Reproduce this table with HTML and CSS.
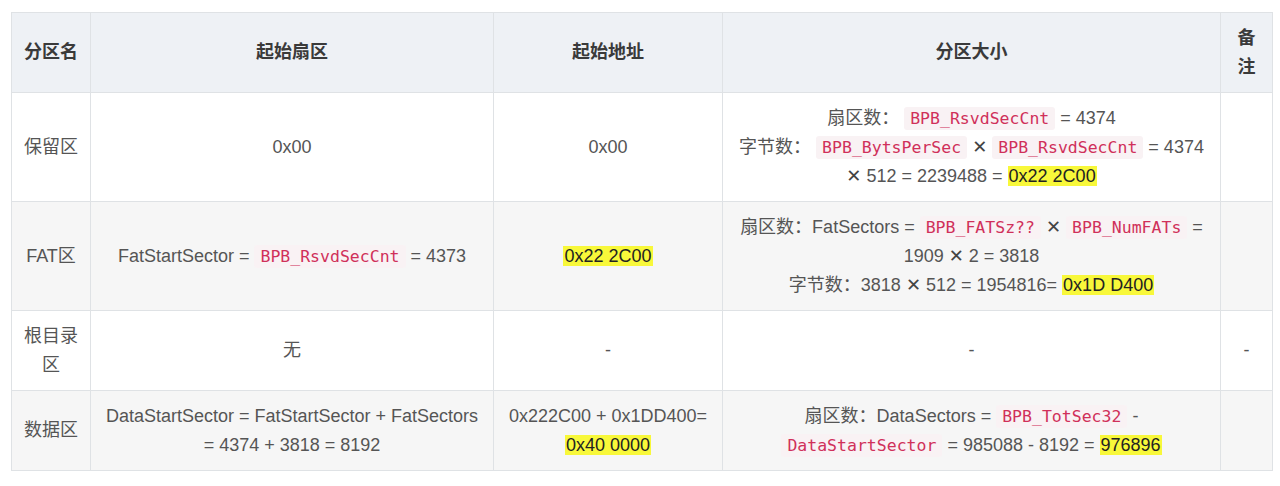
FILE: index.html
```html
<!DOCTYPE html>
<html lang="zh-CN">
<head>
<meta charset="utf-8">
<title>FAT32 分区</title>
<link rel="stylesheet" href="styles.css">
</head>
<body>
<table class="parts">
  <colgroup>
    <col class="c-name">
    <col class="c-sector">
    <col class="c-addr">
    <col class="c-size">
    <col class="c-note">
  </colgroup>
  <thead>
    <tr>
      <th>分区名</th>
      <th>起始扇区</th>
      <th>起始地址</th>
      <th>分区大小</th>
      <th>备注</th>
    </tr>
  </thead>
  <tbody>
    <tr>
      <td>保留区</td>
      <td>0x00</td>
      <td>0x00</td>
      <td>扇区数： <code>BPB_RsvdSecCnt</code> = 4374<br>字节数： <code>BPB_BytsPerSec</code> <span class="x">✕</span> <code>BPB_RsvdSecCnt</code> = 4374<br><span class="x">✕</span> 512 = 2239488 = <mark>0x22 2C00</mark></td>
      <td></td>
    </tr>
    <tr class="alt">
      <td>FAT区</td>
      <td>FatStartSector = <code>BPB_RsvdSecCnt</code> = 4373</td>
      <td><mark>0x22 2C00</mark></td>
      <td>扇区数：FatSectors = <code>BPB_FATSz??</code> <span class="x">✕</span> <code>BPB_NumFATs</code> =<br>1909 <span class="x">✕</span> 2 = 3818<br>字节数：3818 <span class="x">✕</span> 512 = 1954816= <mark>0x1D D400</mark></td>
      <td></td>
    </tr>
    <tr>
      <td>根目录区</td>
      <td>无</td>
      <td>-</td>
      <td>-</td>
      <td>-</td>
    </tr>
    <tr class="alt">
      <td>数据区</td>
      <td>DataStartSector = FatStartSector + FatSectors<br>= 4374 + 3818 = 8192</td>
      <td>0x222C00 + 0x1DD400=<br><mark>0x40 0000</mark></td>
      <td>扇区数：DataSectors = <code>BPB_TotSec32</code> -<br><code>DataStartSector</code> = 985088 - 8192 = <mark>976896</mark></td>
      <td></td>
    </tr>
  </tbody>
</table>
</body>
</html>
```

FILE: styles.css
```css
html, body {
  margin: 0;
  padding: 0;
  background: #ffffff;
}

body {
  padding: 12px 8px 0 11px;
  font-family: "Liberation Sans", Arial, "Noto Sans CJK SC", sans-serif;
  font-size: 18px;
  line-height: 1.6;
  color: #555555;
}

.parts {
  border-collapse: collapse;
  table-layout: fixed;
  width: 1261px;
}

.c-name { width: 79px; }
.c-sector { width: 403px; }
.c-addr { width: 229px; }
.c-size { width: 498px; }
.c-note { width: 52px; }

.parts th,
.parts td {
  border: 1px solid #dfe2e5;
  padding: 11px 12px 10.5px;
  text-align: center;
  vertical-align: middle;
}

.parts th {
  background: #eef1f5;
  color: #3a3a3a;
  font-weight: bold;
}

.parts tr.alt td {
  background: #f6f6f6;
}

code {
  font-family: "DejaVu Sans Mono", "Liberation Mono", monospace;
  font-size: 16.5px;
  color: #d0305a;
  background: #f9f2f4;
  padding: 2px 6px;
  border-radius: 3px;
}

mark {
  background: #f8f83a;
  color: #222222;
  padding: 0 1px;
}

.x {
  font-family: "DejaVu Sans", sans-serif;
  font-weight: bold;
  color: #444444;
}
```
